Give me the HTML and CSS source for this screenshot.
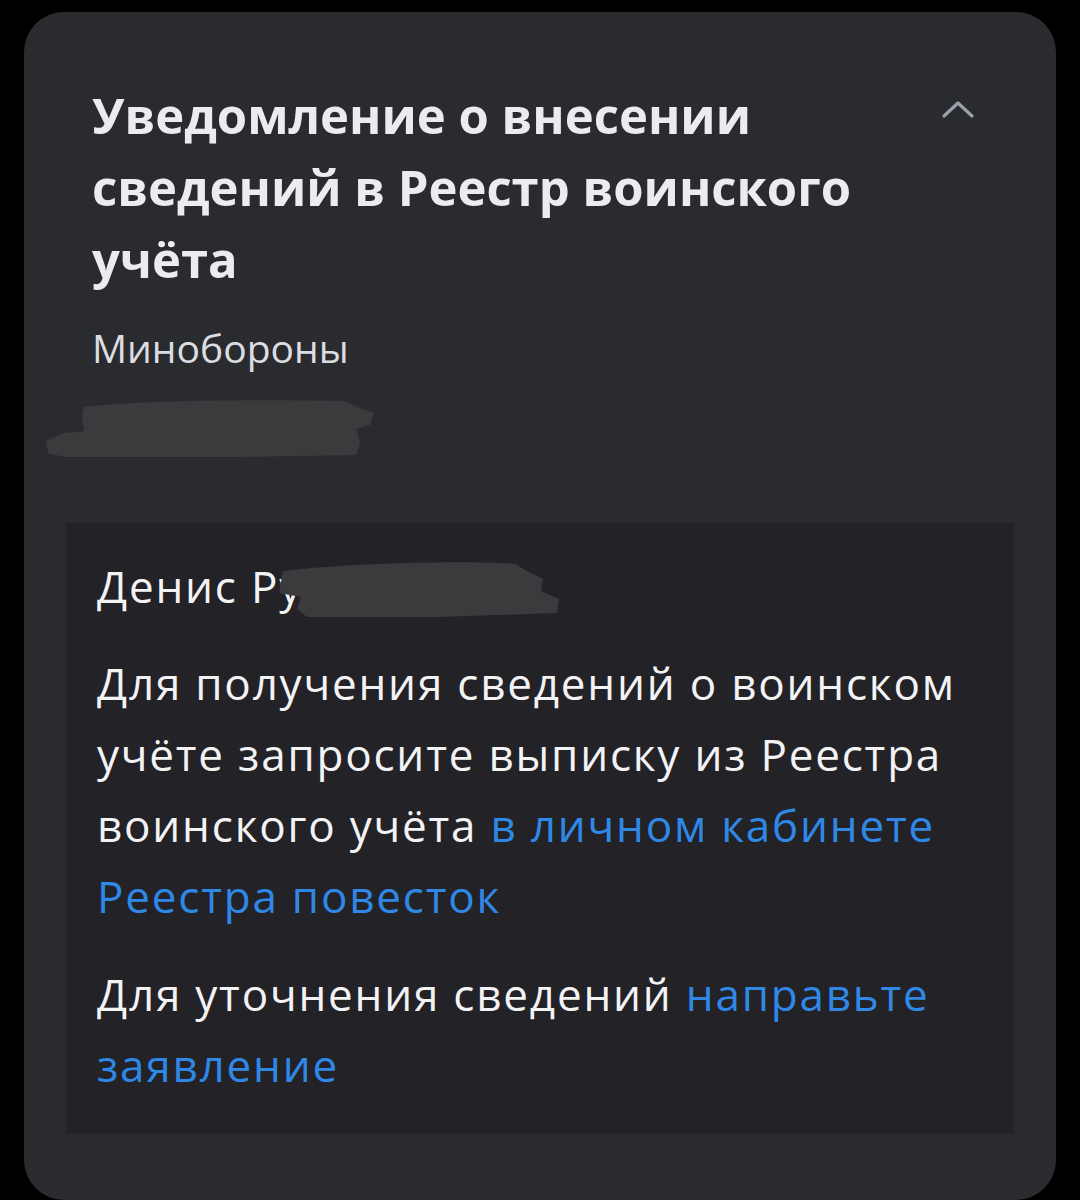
FILE: index.html
```html
<!DOCTYPE html>
<html lang="ru">
<head>
<meta charset="utf-8">
<link rel="stylesheet" href="styles.css">
</head>
<body>
<div class="card">
  <div class="head">
    <h1 class="title">Уведомление о внесении сведений в Реестр воинского учёта</h1>
    <svg class="chev" width="34" height="22" viewBox="0 0 34 22"><path d="M3 18 L17 5 L31 18" fill="none" stroke="#9a9fab" stroke-width="3.2" stroke-linecap="round" stroke-linejoin="round"/></svg>
  </div>
  <div class="org">Минобороны</div>
  <svg class="smear" width="340" height="70" viewBox="0 0 340 70">
    <path d="M40 12 C90 6 200 4 300 6 L318 14 L330 18 L326 30 L312 34 L316 48 L312 60 L200 62 L20 62 L4 58 L2 46 L20 38 L40 36 L38 22 Z" fill="#3b3b3d"/>
  </svg>
  <div class="box">
    <p class="name">Денис Ру<span class="nameblur"><svg width="296" height="62" viewBox="0 0 296 62"><path d="M14 14 C80 6 200 3 246 7 L258 14 L274 22 L272 34 L290 42 L288 56 L170 60 L38 60 L28 52 L32 40 L10 36 Z" fill="#3b3b3d"/></svg></span></p>
    <p class="para">Для получения сведений о воинском учёте запросите выписку из Реестра воинского учёта <span class="link">в личном кабинете Реестра повесток</span></p>
    <p class="para">Для уточнения сведений <span class="link">направьте заявление</span></p>
  </div>
</div>
</body>
</html>
```
FILE: styles.css
```css
html, body {
  margin: 0;
  padding: 0;
  background: #000;
}
body {
  width: 1080px;
  height: 1200px;
  overflow: hidden;
}
.card {
  margin: 12px 24px 0;
  height: 1188px;
  box-sizing: border-box;
  background: #2a2b2f;
  border-radius: 40px;
  padding: 67px 42px 66px;
}
.head {
  display: flex;
  justify-content: space-between;
  align-items: flex-start;
  padding-left: 26px;
}
.title {
  margin: 0;
  font-family: "Open Sans", "Noto Sans", sans-serif;
  font-weight: 700;
  font-size: 49px;
  line-height: 72px;
  color: #ececef;
  width: 800px;
}
.chev {
  margin-top: 19px;
  margin-right: 39px;
}
.org {
  padding-left: 26px;
  margin-top: 27px;
  font-family: "Open Sans", "Noto Sans", sans-serif;
  font-size: 39px;
  line-height: 52px;
  color: #dcdde2;
}
.smear {
  display: block;
  margin: 21px 0 0 -22px;
}
.box {
  margin-top: 58px;
  background: #222227;
  padding: 28px 31px 40px;
  height: 611px;
  box-sizing: border-box;
}
.box p {
  margin: 0;
  font-family: "Open Sans", "Noto Sans", sans-serif;
  font-size: 44px;
  letter-spacing: 1.8px;
  line-height: 71px;
  color: #f3f3f5;
}
.name {
  position: relative;
  margin-bottom: 26px !important;
}
.nameblur {
  position: absolute;
  top: 6px;
  left: 172px;
  line-height: 0;
}
.para + .para {
  margin-top: 27px;
}
.link {
  color: #3088e6;
}
```
